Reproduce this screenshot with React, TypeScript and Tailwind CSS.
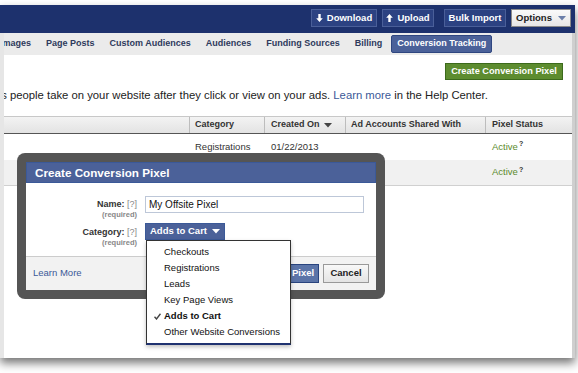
import React from "react";

function Arrow({ up }: { up?: boolean }) {
  return (
    <svg width="7" height="8" viewBox="0 0 7 8" className={up ? "rotate-180" : ""}>
      <path d="M2.3 0h2.4v4.3h2.1L3.5 8 0.2 4.3h2.1z" fill="#fff" />
    </svg>
  );
}

function Caret({ color }: { color: string }) {
  return (
    <svg width="8" height="5" viewBox="0 0 8 5">
      <path d="M0 0h8L4 4.5z" fill={color} />
    </svg>
  );
}

const tabs = ["Images", "Page Posts", "Custom Audiences", "Audiences", "Funding Sources", "Billing"];

const menuItems = ["Checkouts", "Registrations", "Leads", "Key Page Views", "Adds to Cart", "Other Website Conversions"];

function Active() {
  return (
    <span className="text-[9.5px] text-[#5b8a2c]">
      Active<sup className="ml-[1px] text-[7px] font-bold text-[#333]">?</sup>
    </span>
  );
}

export default function App() {
  return (
    <div className="relative h-[373px] w-[578px] overflow-hidden bg-white font-['Liberation_Sans',Arial,sans-serif] text-[#333]">
      {/* window */}
      <div className="mt-[5px] flex h-[353px] w-[575px] flex-col bg-white shadow-[0_5px_9px_rgba(0,0,0,0.55)]">
        {/* top bar */}
        <div className="flex h-[28px] items-start justify-end bg-[#1d316d] pr-[4px] pt-[4px]">
          <button className="flex h-[18px] w-[66px] items-center justify-center gap-[4px] border border-[#4a5f99] bg-[#2c4282] text-[9.5px] font-bold text-white">
            <Arrow />
            Download
          </button>
          <button className="ml-[5px] flex h-[18px] w-[52px] items-center justify-center gap-[4px] border border-[#4a5f99] bg-[#2c4282] text-[9.5px] font-bold text-white">
            <Arrow up />
            Upload
          </button>
          <button className="ml-[10px] flex h-[18px] w-[62px] items-center justify-center border border-[#4a5f99] bg-[#2c4282] text-[9.5px] font-bold text-white">
            Bulk Import
          </button>
          <button className="ml-[5px] flex h-[18px] w-[60px] items-center justify-center gap-[6px] border border-[#8a8a8a] bg-gradient-to-b from-[#fafafa] to-[#e6e6e6] text-[9.5px] font-bold text-[#222]">
            Options
            <Caret color="#6b7fa9" />
          </button>
        </div>

        <div className="flex flex-1 flex-col border-l-[4px] border-r-[3px] border-l-[#e6e6e6] border-r-[#cfcfcf]">
          {/* tabs */}
          <div className="flex h-[22px] items-center gap-[15px] overflow-hidden bg-[#ebebeb] text-[9px] font-bold text-[#2e3a5c]">
            {tabs.map((t, i) => (
              <span key={t} className={i === 0 ? "-ml-[4px] whitespace-nowrap" : "whitespace-nowrap"}>
                {t}
              </span>
            ))}
            <span className="-ml-[6px] whitespace-nowrap rounded-[2px] border border-[#2f4680] bg-[#4b6199] px-[5px] py-[1px] text-white">
              Conversion Tracking
            </span>
          </div>

          {/* content */}
          <div className="flex flex-1 flex-col overflow-hidden">
            <div className="flex justify-end pr-[9px] pt-[8px]">
              <button className="h-[17px] w-[118px] border border-[#3c6a1c] bg-[#5d8c2f] text-[9.2px] font-bold text-white">
                Create Conversion Pixel
              </button>
            </div>

            <p className="mt-[8px] whitespace-nowrap text-[11.3px] leading-[14px] text-[#222]">
              <span className="-ml-[33px]">actions</span> people take on your website after they click or view on your ads.{" "}
              <span className="text-[#3b5998]">Learn more</span> in the Help Center.
            </p>

            {/* table */}
            <div className="mt-[14px]">
              <div className="grid h-[18px] grid-cols-[186px_75px_81px_140px_1fr] border-b border-t border-b-[#555] border-t-[#c8c8c8] bg-gradient-to-b from-[#f3f3f3] to-[#e3e3e3] text-[9px] font-bold text-[#333]">
                <div className="border-r border-[#bdbdbd]" />
                <div className="flex items-center border-r border-[#bdbdbd] pl-[5px]">Category</div>
                <div className="flex items-center gap-[4px] border-r border-[#bdbdbd] pl-[6px]">
                  Created On
                  <Caret color="#444" />
                </div>
                <div className="flex items-center border-r border-[#bdbdbd] pl-[5px]">Ad Accounts Shared With</div>
                <div className="flex items-center pl-[6px]">Pixel Status</div>
              </div>
              <div className="grid h-[26px] grid-cols-[186px_75px_81px_140px_1fr] items-center text-[9.5px]">
                <div />
                <div className="pl-[5px]">Registrations</div>
                <div className="pl-[6px]">01/22/2013</div>
                <div />
                <div className="pl-[6px]">
                  <Active />
                </div>
              </div>
              <div className="grid h-[26px] grid-cols-[186px_75px_81px_140px_1fr] items-center border-b border-[#d0d0d0] bg-[#f1f1f1] text-[9.5px]">
                <div />
                <div />
                <div />
                <div />
                <div className="pl-[6px]">
                  <Active />
                </div>
              </div>
            </div>
          </div>
        </div>
      </div>

      {/* dialog */}
      <div className="absolute left-[17px] top-[153px] h-[146px] w-[368px] rounded-[8px] bg-[#555555] p-[9px]">
        <div className="flex h-full flex-col bg-white">
          <div className="flex h-[21px] items-center border border-[#3b5998] bg-[#4b6199] pl-[8px] text-[11.7px] font-bold text-white">
            Create Conversion Pixel
          </div>
          <div className="flex flex-1 flex-col gap-[4px] pt-[13px]">
            <div className="flex items-start">
              <div className="mt-[2px] flex w-[111px] flex-col items-end">
                <div className="text-[9px] leading-[12px]">
                  <span className="font-bold">Name:</span> <span className="text-[#888]">[?]</span>
                </div>
                <div className="text-[7.5px] font-bold leading-[9px] text-[#888]">(required)</div>
              </div>
              <div className="ml-[8px] flex h-[17px] w-[219px] items-center border border-[#bdc7d8] pl-[3px] text-[10px] text-[#111]">
                My Offsite Pixel
              </div>
            </div>
            <div className="flex items-start">
              <div className="mt-[3px] flex w-[111px] flex-col items-end">
                <div className="text-[9px] leading-[12px]">
                  <span className="font-bold">Category:</span> <span className="text-[#888]">[?]</span>
                </div>
                <div className="text-[7.5px] font-bold leading-[9px] text-[#888]">(required)</div>
              </div>
              <div className="ml-[8px] flex h-[17px] w-[80px] items-center justify-center gap-[5px] border border-[#3b5998] bg-[#4b6199] text-[9.5px] font-bold text-white">
                Adds to Cart
                <Caret color="#fff" />
              </div>
            </div>
          </div>
          <div className="flex h-[34px] items-center justify-between border-t border-[#cccccc] bg-[#f2f2f2] pl-[7px] pr-[7px]">
            <span className="text-[9.5px] text-[#3b5998]">Learn More</span>
            <div className="flex gap-[4px]">
              <button className="h-[19px] w-[64px] border border-[#29447e] bg-[#5b74a8] text-[9.5px] font-bold text-white">
                Create Pixel
              </button>
              <button className="h-[19px] w-[46px] border border-[#999] bg-gradient-to-b from-[#f8f8f8] to-[#e4e4e4] text-[9.5px] font-bold text-[#222]">
                Cancel
              </button>
            </div>
          </div>
        </div>

        {/* dropdown menu */}
        <div className="absolute left-[129px] top-[87px] w-[145px] border border-b-2 border-[#333] border-b-[#1f3270] bg-white py-[3px] shadow-[0_2px_4px_rgba(0,0,0,0.25)]">
          {menuItems.map((m) => (
            <div key={m} className="flex h-[16px] items-center text-[9.5px] text-[#111]">
              <span className="flex w-[17px] justify-end pr-[3px]">
                {m === "Adds to Cart" && (
                  <svg width="7" height="7" viewBox="0 0 7 7">
                    <path d="M0.5 3.8 2.5 6 6.5 0.8" fill="none" stroke="#444" strokeWidth="1.4" />
                  </svg>
                )}
              </span>
              <span className={m === "Adds to Cart" ? "font-bold" : ""}>{m}</span>
            </div>
          ))}
        </div>
      </div>
    </div>
  );
}
